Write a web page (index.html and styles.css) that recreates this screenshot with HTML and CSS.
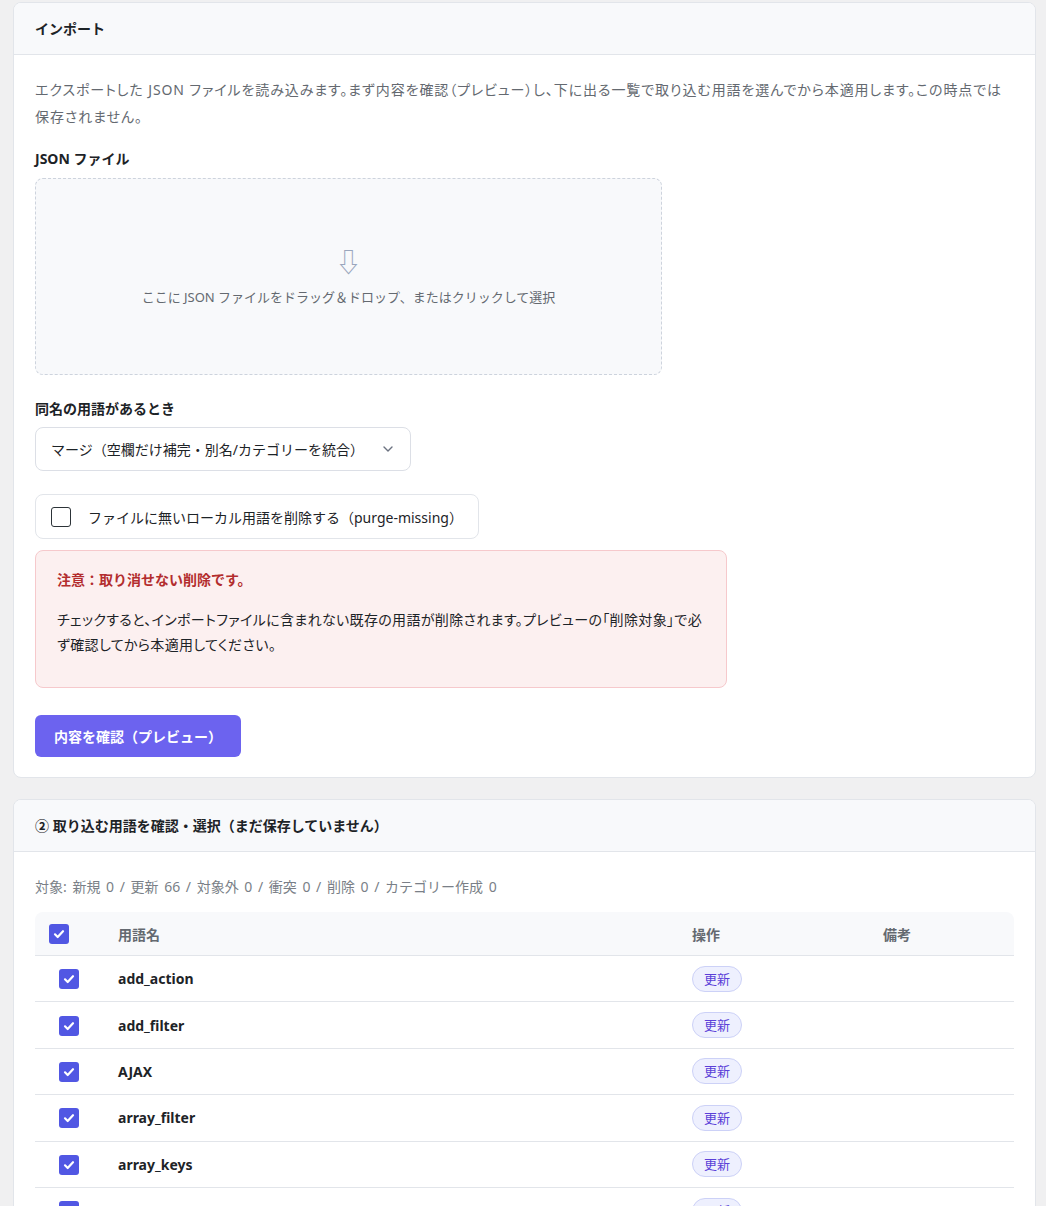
FILE: index.html
```html
<!DOCTYPE html>
<html lang="ja">
<head>
    <meta charset="utf-8">
    <link rel="stylesheet" href="styles.css">
</head>
<body>
    <div class="card">
        <div class="card-header">インポート</div>
        <div class="card-body">
            <p class="desc">エクスポートした JSON ファイルを読み込みます。まず内容を確認（プレビュー）し、下に出る一覧で取り込む用語を選んでから本適用します。この時点では保存されません。</p>

            <div class="field-label">JSON ファイル</div>
            <div class="dropzone">
                <span class="drop-arrow">⇩</span>
                <span class="drop-text">ここに JSON ファイルをドラッグ＆ドロップ、またはクリックして選択</span>
            </div>

            <div class="field-label label-gap">同名の用語があるとき</div>
            <div class="select">
                <span>マージ（空欄だけ補完・別名/カテゴリーを統合）</span>
                <svg width="14" height="14" viewBox="0 0 14 14"><path d="M3 5l4 4 4-4" fill="none" stroke="#6b7280" stroke-width="1.4" stroke-linecap="round" stroke-linejoin="round"/></svg>
            </div>

            <label class="check-option">
                <span class="box"></span>
                <span>ファイルに無いローカル用語を削除する（purge-missing）</span>
            </label>

            <div class="alert">
                <div class="alert-title">注意：取り消せない削除です。</div>
                <p>チェックすると、インポートファイルに含まれない既存の用語が削除されます。プレビューの「削除対象」で必ず確認してから本適用してください。</p>
            </div>

            <button type="button" class="btn-primary">内容を確認（プレビュー）</button>
        </div>
    </div>

    <div class="card">
        <div class="card-header">② 取り込む用語を確認・選択（まだ保存していません）</div>
        <div class="card-body">
            <div class="summary">対象: 新規 0 / 更新 66 / 対象外 0 / 衝突 0 / 削除 0 / カテゴリー作成 0</div>
            <table class="terms">
                <colgroup>
                    <col style="width: 68px">
                    <col style="width: 574px">
                    <col style="width: 191px">
                    <col>
                </colgroup>
                <thead>
                    <tr>
                        <th><span class="box checked"><svg width="14" height="14" viewBox="0 0 14 14"><path d="M3 7.3l2.7 2.7L11 4.2" fill="none" stroke="#fff" stroke-width="2.2" stroke-linecap="round" stroke-linejoin="round"/></svg></span></th>
                        <th>用語名</th>
                        <th>操作</th>
                        <th>備考</th>
                    </tr>
                </thead>
                <tbody>
                    <tr>
                        <td class="cell-check"><span class="box checked"><svg width="14" height="14" viewBox="0 0 14 14"><path d="M3 7.3l2.7 2.7L11 4.2" fill="none" stroke="#fff" stroke-width="2.2" stroke-linecap="round" stroke-linejoin="round"/></svg></span></td>
                        <td class="term">add_action</td>
                        <td><span class="badge">更新</span></td>
                        <td></td>
                    </tr>
                    <tr>
                        <td class="cell-check"><span class="box checked"><svg width="14" height="14" viewBox="0 0 14 14"><path d="M3 7.3l2.7 2.7L11 4.2" fill="none" stroke="#fff" stroke-width="2.2" stroke-linecap="round" stroke-linejoin="round"/></svg></span></td>
                        <td class="term">add_filter</td>
                        <td><span class="badge">更新</span></td>
                        <td></td>
                    </tr>
                    <tr>
                        <td class="cell-check"><span class="box checked"><svg width="14" height="14" viewBox="0 0 14 14"><path d="M3 7.3l2.7 2.7L11 4.2" fill="none" stroke="#fff" stroke-width="2.2" stroke-linecap="round" stroke-linejoin="round"/></svg></span></td>
                        <td class="term">AJAX</td>
                        <td><span class="badge">更新</span></td>
                        <td></td>
                    </tr>
                    <tr>
                        <td class="cell-check"><span class="box checked"><svg width="14" height="14" viewBox="0 0 14 14"><path d="M3 7.3l2.7 2.7L11 4.2" fill="none" stroke="#fff" stroke-width="2.2" stroke-linecap="round" stroke-linejoin="round"/></svg></span></td>
                        <td class="term">array_filter</td>
                        <td><span class="badge">更新</span></td>
                        <td></td>
                    </tr>
                    <tr>
                        <td class="cell-check"><span class="box checked"><svg width="14" height="14" viewBox="0 0 14 14"><path d="M3 7.3l2.7 2.7L11 4.2" fill="none" stroke="#fff" stroke-width="2.2" stroke-linecap="round" stroke-linejoin="round"/></svg></span></td>
                        <td class="term">array_keys</td>
                        <td><span class="badge">更新</span></td>
                        <td></td>
                    </tr>
                    <tr>
                        <td class="cell-check"><span class="box checked"><svg width="14" height="14" viewBox="0 0 14 14"><path d="M3 7.3l2.7 2.7L11 4.2" fill="none" stroke="#fff" stroke-width="2.2" stroke-linecap="round" stroke-linejoin="round"/></svg></span></td>
                        <td class="term">array_map</td>
                        <td><span class="badge">更新</span></td>
                        <td></td>
                    </tr>
                </tbody>
            </table>
        </div>
    </div>
</body>
</html>
```

FILE: styles.css
```css
body {
    background-color: #f0f0f1;
    font-family: "Noto Sans", "Noto Sans CJK JP", sans-serif;
    font-size: 14px;
    color: #1d2327;
    margin: 0;
    padding: 2px 10px 0 13px;
}
.card {
    background-color: #fff;
    border: 1px solid #e2e5ea;
    border-radius: 8px;
    margin-bottom: 21px;
    overflow: hidden;
}
.card-header {
    background-color: #f8f9fb;
    border-bottom: 1px solid #e2e5ea;
    height: 51px;
    line-height: 51px;
    padding: 0 21px;
    font-weight: bold;
}
.card-body {
    padding: 21px 21px 20px;
}
.desc {
    margin: 0;
    max-width: 970px;
    line-height: 27px;
    color: #646970;
    font-feature-settings: "palt";
    letter-spacing: 0.9px;
}
.field-label {
    font-weight: bold;
    line-height: 20px;
    margin-top: 19px;
    margin-bottom: 9px;
}
.field-label.label-gap {
    margin-top: 24px;
    margin-bottom: 8px;
}
.dropzone {
    width: 625px;
    height: 195px;
    background-color: #f8f9fb;
    border: 1px dashed #cdd3dd;
    border-radius: 8px;
    display: flex;
    flex-direction: column;
    align-items: center;
    justify-content: center;
}
.drop-arrow {
    font-size: 26px;
    line-height: 28px;
    color: #9aa6bd;
    margin-bottom: 11px;
}
.drop-text {
    font-size: 13px;
    color: #646970;
}
.select {
    width: 344px;
    height: 42px;
    border: 1px solid #dcdfe6;
    border-radius: 8px;
    padding: 0 15px;
    display: flex;
    align-items: center;
    justify-content: space-between;
}
.check-option {
    display: inline-flex;
    align-items: center;
    gap: 17px;
    height: 43px;
    padding: 0 15px;
    margin-top: 23px;
    border: 1px solid #e2e5ea;
    border-radius: 8px;
}
.box {
    display: inline-flex;
    align-items: center;
    justify-content: center;
    width: 20px;
    height: 20px;
    box-sizing: border-box;
    border: 1.5px solid #2c3338;
    border-radius: 3px;
    vertical-align: middle;
}
.box.checked {
    background-color: #5157e3;
    border: none;
}
.alert {
    width: 648px;
    margin-top: 11px;
    padding: 18px 21px 30px;
    background-color: #fcf0f0;
    border: 1px solid #f6c9cc;
    border-radius: 8px;
}
.alert-title {
    color: #b32d2e;
    font-weight: bold;
    line-height: 22px;
}
.alert p {
    margin: 16px 0 0;
    line-height: 25px;
    font-feature-settings: "palt";
    letter-spacing: 0.35px;
}
.btn-primary {
    display: block;
    margin-top: 27px;
    height: 42px;
    padding: 0 19px;
    background-color: #6c63ef;
    color: #fff;
    border: none;
    border-radius: 6px;
    font-family: inherit;
    font-size: 14px;
    font-weight: bold;
}
.summary {
    line-height: 22px;
    color: #7a7f87;
    word-spacing: 2px;
    margin-top: 3px;
    margin-bottom: 14px;
}
.terms {
    width: 100%;
    table-layout: fixed;
    border-collapse: collapse;
}
.terms th {
    background-color: #f8f9fb;
    height: 43px;
    padding: 0 15px;
    text-align: left;
    font-weight: bold;
    color: #646970;
    border-bottom: 1px solid #e2e5ea;
}
.terms th:first-child {
    padding-left: 14px;
    border-top-left-radius: 8px;
}
.terms th:last-child {
    border-top-right-radius: 8px;
}
.terms td {
    height: 45.4px;
    padding: 0 15px;
    border-bottom: 1px solid #e2e5ea;
}
.terms td.cell-check {
    text-align: center;
    padding: 0;
}
.term {
    font-weight: bold;
}
.badge {
    display: inline-block;
    height: 24px;
    line-height: 24px;
    padding: 0 11px;
    border: 1px solid #ccd1f7;
    border-radius: 13px;
    background-color: #eef0fe;
    color: #5b3fd8;
    font-size: 13px;
}
```
